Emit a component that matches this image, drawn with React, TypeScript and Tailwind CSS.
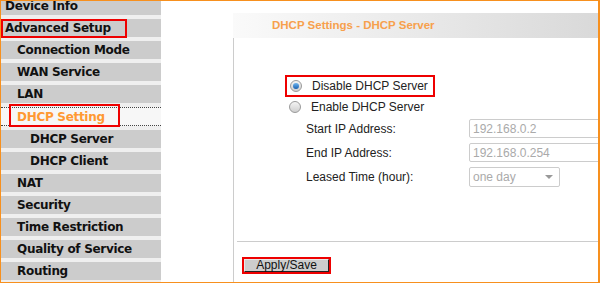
import React from "react";

const menu: { label: string; level: number; active?: boolean; boxed?: boolean }[] = [
  { label: "Device Info", level: 0 },
  { label: "Advanced Setup", level: 0, boxed: true },
  { label: "Connection Mode", level: 1 },
  { label: "WAN Service", level: 1 },
  { label: "LAN", level: 1 },
  { label: "DHCP Setting", level: 1, active: true },
  { label: "DHCP Server", level: 2 },
  { label: "DHCP Client", level: 2 },
  { label: "NAT", level: 1 },
  { label: "Security", level: 1 },
  { label: "Time Restriction", level: 1 },
  { label: "Quality of Service", level: 1 },
  { label: "Routing", level: 1 },
];

function Radio({ checked }: { checked?: boolean }) {
  return (
    <span className="w-[12px] h-[12px] rounded-full border border-[#9a9a9a] bg-gradient-to-b from-[#f4f4f4] to-[#cfcfcf] flex items-center justify-center shrink-0">
      {checked && (
        <span className="w-[6px] h-[6px] rounded-full bg-gradient-to-b from-[#6fb6ef] to-[#1560b0]" />
      )}
    </span>
  );
}

function MenuRow({ item }: { item: (typeof menu)[number] }) {
  const pad = item.level === 0 ? "pl-[4px]" : item.level === 1 ? "pl-[16px]" : "pl-[29px]";
  if (item.active) {
    return (
      <div className={`relative h-[19px] flex items-center bg-[#f7f7f7] border-y border-dotted border-[#444] ${pad}`}>
        <span className="text-[#ff9933]">{item.label}</span>
        <span className="absolute left-[8px] top-[-4px] w-[111px] h-[23px] border-2 border-[#ee0000]" />
      </div>
    );
  }
  return (
    <div className={`relative h-[18px] flex items-center bg-[#cccccc] ${pad}`}>
      <span className="text-[#111]">{item.label}</span>
      {item.boxed && <span className="absolute left-0 top-0 w-[126px] h-[19px] border-2 border-[#ee0000]" />}
    </div>
  );
}

export default function App() {
  return (
    <div className="w-[600px] h-[283px] border border-r-2 border-[#f7901e] bg-white flex overflow-hidden">
      <div className="w-[160px] shrink-0 -mt-[4px] flex flex-col gap-[4px] bg-[#efefef] font-['DejaVu_Sans',sans-serif] font-bold text-[12px] tracking-[-0.3px]">
        {menu.map((m) => (
          <MenuRow key={m.label} item={m} />
        ))}
      </div>

      <div className="ml-[72px] flex-1 flex flex-col font-['Liberation_Sans',Arial,sans-serif] text-[12px] text-[#222]">
        <div className="mt-[12px] h-[25px] flex items-center pl-[39px] bg-gradient-to-r from-[#fafafa] to-[#d8d8d8] text-[#f7a04c] font-bold text-[11.5px]">
          DHCP Settings - DHCP Server
        </div>
        <div className="flex-1 border-l border-[#cccccc] flex flex-col">
          <div className="mt-[37px] ml-[51px] w-[150px] h-[22px] border-2 border-[#ee0000] flex items-center gap-[10px] pl-[3px]">
            <Radio checked />
            <span>Disable DHCP Server</span>
          </div>
          <div className="ml-[55px] h-[20px] flex items-center gap-[10px]">
            <Radio />
            <span>Enable DHCP Server</span>
          </div>
          <div className="ml-[72px] flex flex-col gap-[5px] mt-[2px]">
            <div className="flex items-center h-[19px]">
              <span className="w-[163px]">Start IP Address:</span>
              <div className="w-[140px] h-[19px] border border-[#cccccc] rounded-[2px] pl-[3px] flex items-center text-[#aaaaaa]">192.168.0.2</div>
            </div>
            <div className="flex items-center h-[19px]">
              <span className="w-[163px]">End IP Address:</span>
              <div className="w-[140px] h-[19px] border border-[#cccccc] rounded-[2px] pl-[3px] flex items-center text-[#aaaaaa]">192.168.0.254</div>
            </div>
            <div className="flex items-center h-[20px]">
              <span className="w-[163px]">Leased Time (hour):</span>
              <div className="w-[91px] h-[20px] border border-[#cccccc] rounded-[2px] pl-[3px] pr-[6px] flex items-center justify-between text-[#aaaaaa]">
                <span>one day</span>
                <span className="w-0 h-0 border-x-[4px] border-x-transparent border-t-[4px] border-t-[#999999]" />
              </div>
            </div>
          </div>
          <div className="mt-auto ml-[3px] border-t border-[#cccccc] h-[41px] flex flex-col">
            <div className="mt-[15px] ml-[5px] w-[89px] h-[17px] border-2 border-[#ee0000]">
              <button className="w-full h-full bg-[#cdcdcd] border border-[#e8e8e8] border-r-[#222] border-b-[#222] flex items-end justify-center leading-none text-[12px] text-[#111]">
                Apply/Save
              </button>
            </div>
          </div>
        </div>
      </div>
    </div>
  );
}
